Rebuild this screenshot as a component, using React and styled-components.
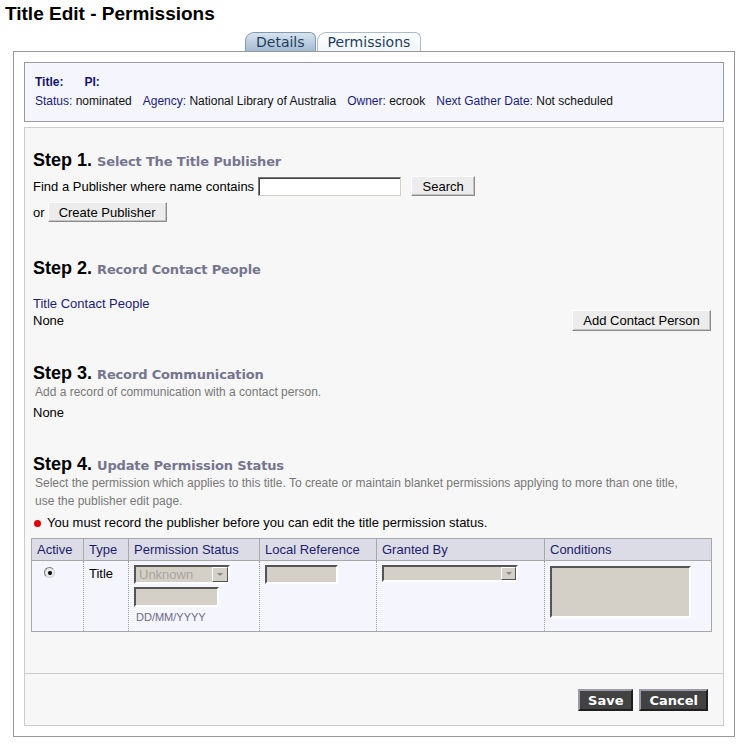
import React from 'react';
import styled, { createGlobalStyle } from 'styled-components';

const Global = createGlobalStyle`
  html, body { margin: 0; padding: 0; background: #fff; }
  body { font-family: "Liberation Sans", Arial, sans-serif; font-size: 13px; color: #000; }
`;

const Page = styled.div`
  width: 749px;
  padding-top: 3px;
`;

const PageTitle = styled.h1`
  margin: 0 0 0 5px;
  font: bold 19px/22px "Liberation Sans", Arial, sans-serif;
  color: #000;
`;

const TabBar = styled.div`
  display: flex;
  gap: 1px;
  margin: 7px 0 0 245px;
  height: 19px;
`;

const Tab = styled.div`
  height: 19px;
  box-sizing: border-box;
  padding: 0 10px;
  font: 14px/18px "DejaVu Sans", Verdana, sans-serif;
  color: #1d3d60;
  border: 1px solid ${p => (p.$active ? '#a9bccd' : '#7f9ab3')};
  border-bottom: none;
  border-radius: 9px 6px 0 0;
  background: ${p =>
    p.$active ? 'linear-gradient(#ffffff, #f1f5f9)' : 'linear-gradient(#d9e4ee, #a2bad1)'};
`;

const Frame = styled.div`
  margin-left: 13px;
  width: 722px;
  box-sizing: border-box;
  border: 1px solid #999;
  padding: 10px;
`;

const InfoBox = styled.div`
  border: 1px solid #999;
  background: #f4f5fd;
  padding: 10px;
`;

const InfoTitle = styled.div`
  display: flex;
  gap: 21px;
  font-weight: bold;
  font-size: 12px;
  line-height: 19px;
  color: #14146e;
`;

const InfoLine = styled.div`
  display: flex;
  gap: 11px;
  font-size: 12px;
  line-height: 19px;
`;

const InfoItem = styled.span`
  color: #111;
`;

const InfoLabel = styled.span`
  color: #1c1c78;
`;

const ContentBox = styled.div`
  margin-top: 5px;
  border: 1px solid #ccc;
  background: #f7f7f7;
`;

const Body = styled.div`
  padding: 20px 12px 41px 8px;
`;

const StepHeading = styled.div`
  margin-top: ${p => p.$top || 0}px;
  font: bold 18px/24px "Liberation Sans", Arial, sans-serif;
  color: #000;
`;

const StepSub = styled.span`
  font: bold 13px "DejaVu Sans", Verdana, sans-serif;
  letter-spacing: -0.15px;
  color: #75758f;
`;

const FormRow = styled.div`
  display: flex;
  align-items: center;
  height: 26px;
  margin-top: ${p => p.$top || 0}px;
`;

const TextInput = styled.div`
  width: 143px;
  height: 19px;
  box-sizing: border-box;
  margin-left: 4px;
  background: #fff;
  border: 1px solid;
  border-color: #7a7a7a #d4d0c8 #d4d0c8 #7a7a7a;
  box-shadow: inset 1px 1px 0 #404040;
`;

const Button = styled.button`
  height: ${p => p.$h || 20}px;
  width: ${p => p.$w}px;
  margin-left: ${p => p.$ml || 0}px;
  box-sizing: border-box;
  padding: 0;
  font: 13px "Liberation Sans", Arial, sans-serif;
  color: #000;
  background: #ececec;
  border: 1px solid;
  border-color: #fff #8a8a8a #8a8a8a #fff;
  box-shadow: inset -1px -1px 0 #c4c4c4;
  text-align: center;
`;

const Label = styled.div`
  color: #1c1c70;
  line-height: 16px;
  margin-top: 16px;
`;

const SplitRow = styled.div`
  display: flex;
  justify-content: space-between;
  align-items: center;
  margin-top: -2px;
  height: 21px;
`;

const Desc = styled.div`
  font-size: 12px;
  line-height: ${p => p.$lh || 14}px;
  margin-top: ${p => p.$top || 0}px;
  color: #777;
  padding-left: 2px;
`;

const Plain = styled.div`
  line-height: 16px;
  margin-top: ${p => p.$top || 0}px;
`;

const Warning = styled.div`
  display: flex;
  align-items: center;
  line-height: 16px;
  margin-top: 5px;
`;

const Bullet = styled.span`
  width: 7px;
  height: 7px;
  border-radius: 50%;
  background: #e00000;
  margin: 0 6px 0 1px;
`;

const PermTable = styled.table`
  margin: 7px 0 0 -2px;
  width: 680px;
  border-collapse: collapse;
  table-layout: fixed;
  border: 1px solid #a8a8a8;
`;

const Th = styled.th`
  height: 21px;
  padding: 0 5px;
  line-height: 21px;
  text-align: left;
  font-weight: normal;
  font-size: 13px;
  color: #1c1c70;
  background: #dcdce6;
  border: 1px solid #a8a8a8;
`;

const Td = styled.td`
  height: 66px;
  padding: 4px 5px 0;
  vertical-align: top;
  background: #f5f6fd;
  border-left: 1px dotted #999;
  border-right: 1px dotted #999;
  line-height: 18px;
`;

const Radio = styled.span`
  display: flex;
  align-items: center;
  justify-content: center;
  width: 11px;
  height: 11px;
  box-sizing: border-box;
  margin: 2px 0 0 7px;
  border-radius: 50%;
  border: 1px solid;
  border-color: #7a7a7a #d0d0d0 #d0d0d0 #7a7a7a;
  background: #e8e8e8;
  &::after {
    content: '';
    width: 4px;
    height: 4px;
    border-radius: 50%;
    background: #000;
  }
`;

const Inset = styled.div`
  width: ${p => p.$w}px;
  height: ${p => p.$h}px;
  margin-top: ${p => p.$top || 0}px;
  box-sizing: border-box;
  background: #d4d0c8;
  border: 2px solid;
  border-color: #555 #fff #fff #555;
  display: flex;
  align-items: center;
  justify-content: space-between;
  font-size: 13px;
  color: #a8a49c;
  padding-left: 3px;
`;

const DropArrow = styled.span`
  width: ${p => p.$w || 16}px;
  height: 100%;
  box-sizing: border-box;
  border: 1px solid;
  border-color: #fff #555 #555 #fff;
  background: #d4d0c8;
  display: flex;
  align-items: center;
  justify-content: center;
  &::after {
    content: '';
    border-left: 3px solid transparent;
    border-right: 3px solid transparent;
    border-top: 3px solid #888;
  }
`;

const DateHint = styled.div`
  margin-top: 3px;
  font-size: 11px;
  line-height: 14px;
  color: #6a6a8a;
  padding-left: 2px;
`;

const Footer = styled.div`
  border-top: 1px solid #ccc;
  display: flex;
  justify-content: flex-end;
  gap: 6px;
  padding: 15px 15px 14px;
`;

const DarkButton = styled.button`
  height: 22px;
  box-sizing: border-box;
  padding: 0 8px;
  font: bold 13px "DejaVu Sans", Verdana, sans-serif;
  color: #fff;
  background: #424242;
  border: 2px solid;
  border-color: #9a9aab #1e1e1e #1e1e1e #9a9aab;
`;

export default function App() {
  return (
    <Page>
      <Global />
      <PageTitle>Title Edit - Permissions</PageTitle>
      <TabBar>
        <Tab>Details</Tab>
        <Tab $active>Permissions</Tab>
      </TabBar>
      <Frame>
        <InfoBox>
          <InfoTitle>
            <span>Title:</span>
            <span>PI:</span>
          </InfoTitle>
          <InfoLine>
            <InfoItem><InfoLabel>Status:</InfoLabel> nominated</InfoItem>
            <InfoItem><InfoLabel>Agency:</InfoLabel> National Library of Australia</InfoItem>
            <InfoItem><InfoLabel>Owner:</InfoLabel> ecrook</InfoItem>
            <InfoItem><InfoLabel>Next Gather Date:</InfoLabel> Not scheduled</InfoItem>
          </InfoLine>
        </InfoBox>
        <ContentBox>
          <Body>
            <StepHeading>
              Step 1. <StepSub>Select The Title Publisher</StepSub>
            </StepHeading>
            <FormRow $top={1}>
              Find a Publisher where name contains
              <TextInput />
              <Button $w={64} $ml={10}>Search</Button>
            </FormRow>
            <FormRow>
              or
              <Button $w={119} $ml={3}>Create Publisher</Button>
            </FormRow>

            <StepHeading $top={31}>
              Step 2. <StepSub>Record Contact People</StepSub>
            </StepHeading>
            <Label>Title Contact People</Label>
            <SplitRow>
              <span>None</span>
              <Button $w={139} $h={21}>Add Contact Person</Button>
            </SplitRow>

            <StepHeading $top={30}>
              Step 3. <StepSub>Record Communication</StepSub>
            </StepHeading>
            <Desc>Add a record of communication with a contact person.</Desc>
            <Plain $top={6}>None</Plain>

            <StepHeading $top={31}>
              Step 4. <StepSub>Update Permission Status</StepSub>
            </StepHeading>
            <Desc $lh={18} $top={-2}>
              Select the permission which applies to this title. To create or maintain blanket permissions applying to more than one title,
              <br />
              use the publisher edit page.
            </Desc>
            <Warning>
              <Bullet />
              You must record the publisher before you can edit the title permission status.
            </Warning>

            <PermTable>
              <colgroup>
                <col style={{ width: 52 }} />
                <col style={{ width: 45 }} />
                <col style={{ width: 131 }} />
                <col style={{ width: 117 }} />
                <col style={{ width: 168 }} />
                <col style={{ width: 167 }} />
              </colgroup>
              <thead>
                <tr>
                  <Th>Active</Th>
                  <Th>Type</Th>
                  <Th>Permission Status</Th>
                  <Th>Local Reference</Th>
                  <Th>Granted By</Th>
                  <Th>Conditions</Th>
                </tr>
              </thead>
              <tbody>
                <tr>
                  <Td><Radio /></Td>
                  <Td>Title</Td>
                  <Td>
                    <Inset $w={96} $h={19}>
                      Unknown
                      <DropArrow />
                    </Inset>
                    <Inset $w={85} $h={20} $top={3} />
                    <DateHint>DD/MM/YYYY</DateHint>
                  </Td>
                  <Td>
                    <Inset $w={73} $h={19} />
                  </Td>
                  <Td>
                    <Inset $w={136} $h={17}>
                      <span />
                      <DropArrow $w={15} />
                    </Inset>
                  </Td>
                  <Td>
                    <Inset $w={141} $h={52} $top={1} />
                  </Td>
                </tr>
              </tbody>
            </PermTable>
          </Body>
          <Footer>
            <DarkButton>Save</DarkButton>
            <DarkButton>Cancel</DarkButton>
          </Footer>
        </ContentBox>
      </Frame>
    </Page>
  );
}
